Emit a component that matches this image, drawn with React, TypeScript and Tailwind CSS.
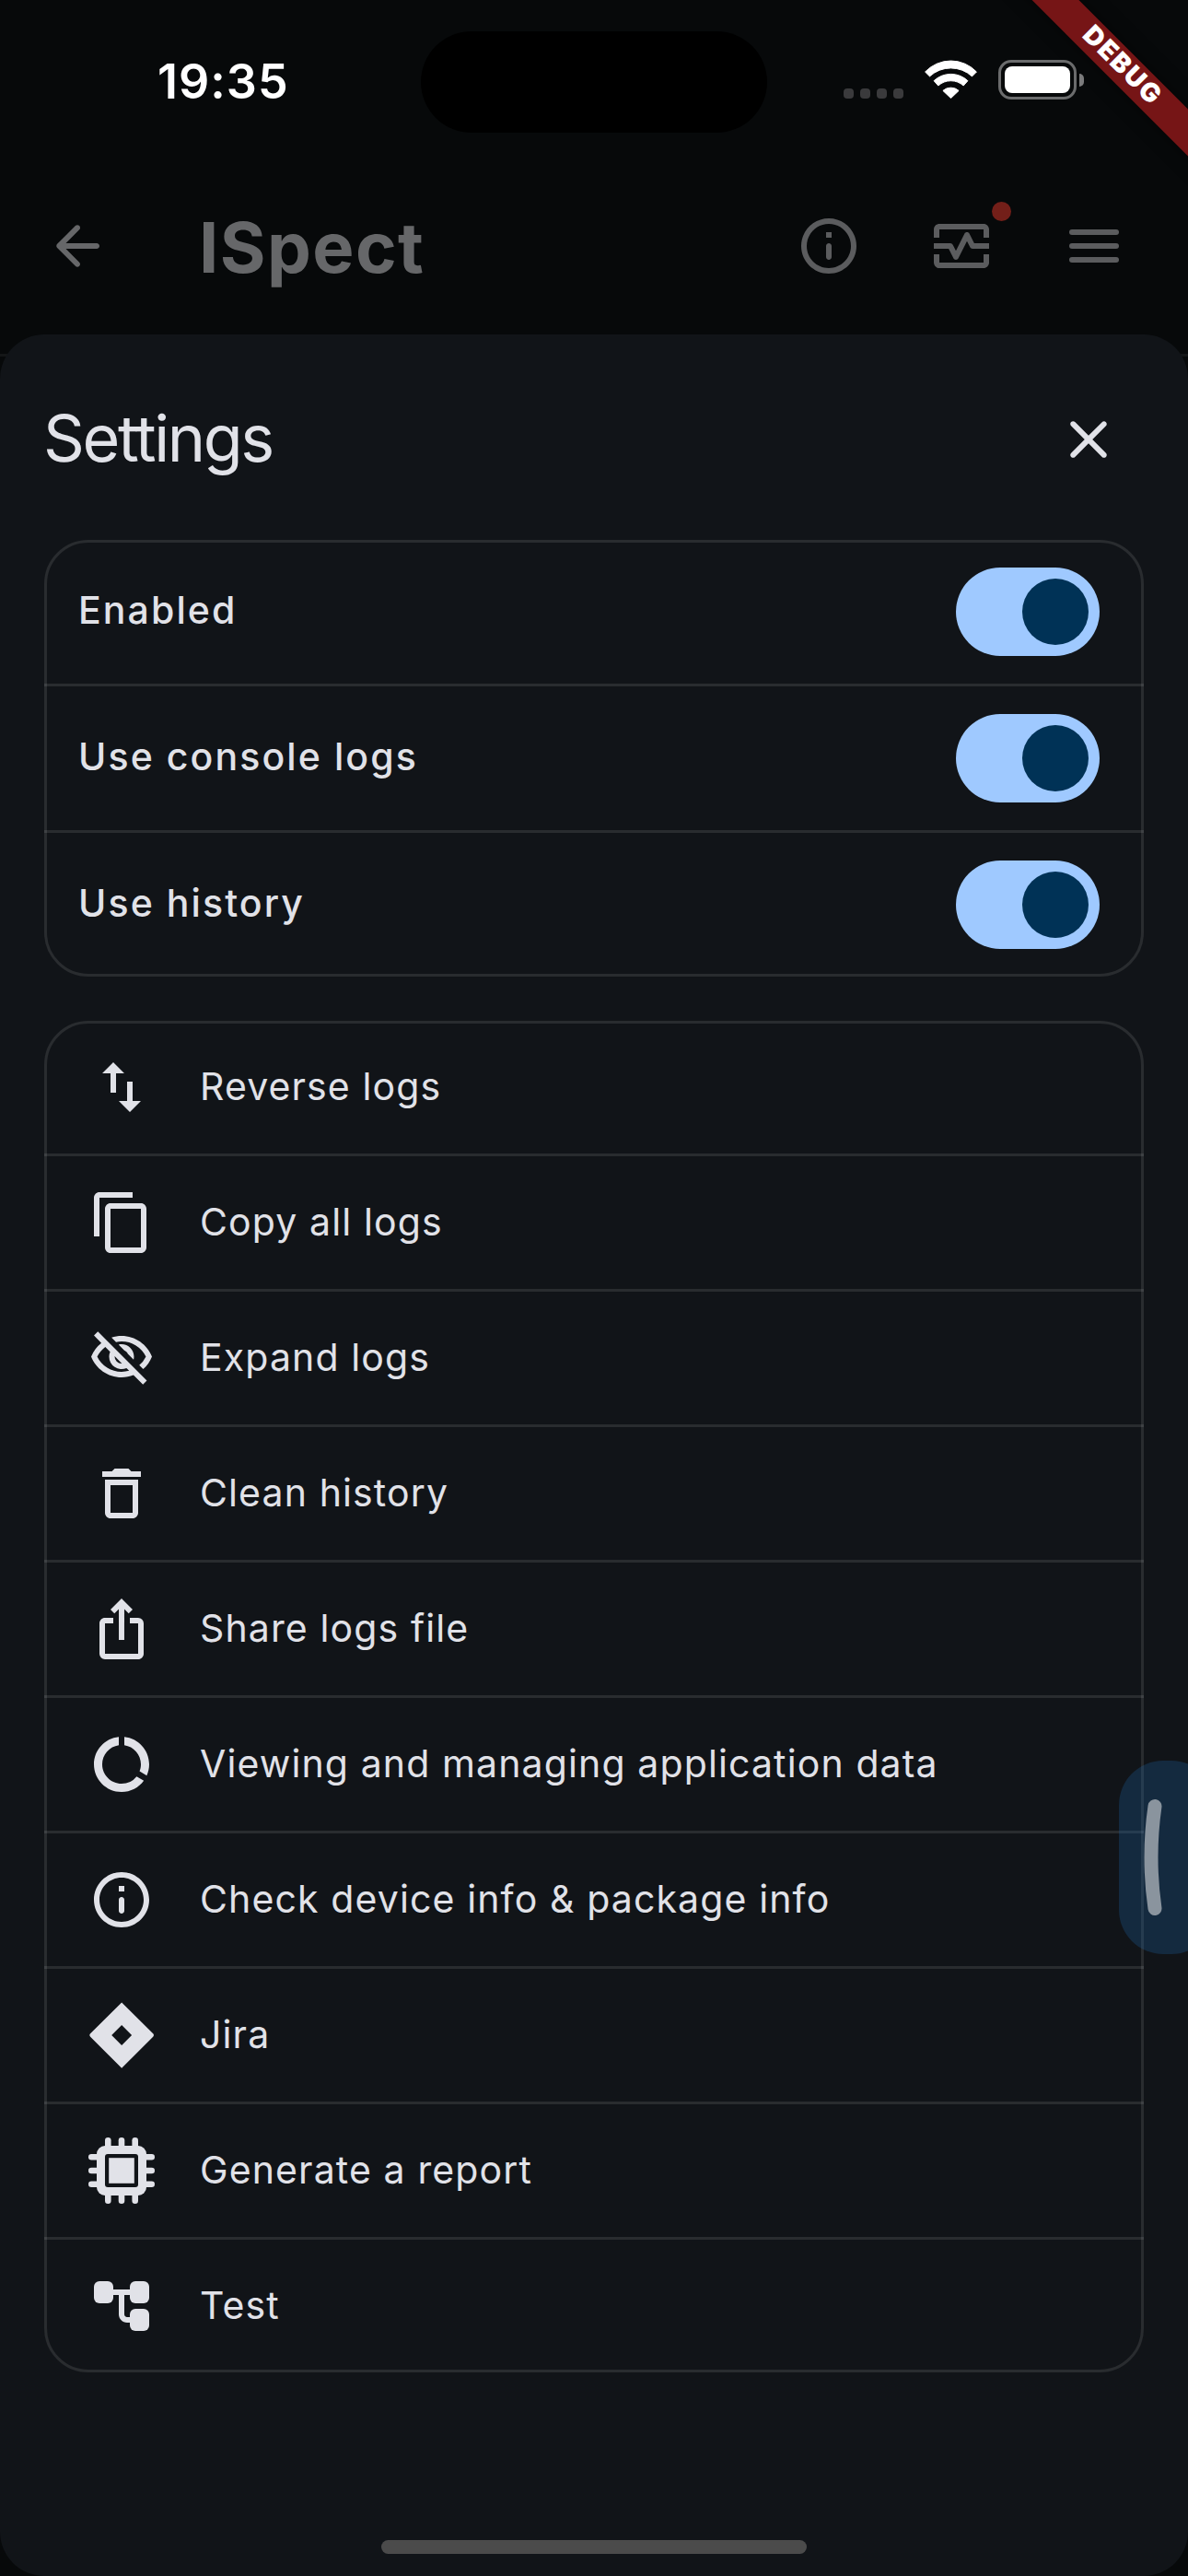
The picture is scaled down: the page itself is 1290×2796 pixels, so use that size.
import React from 'react';
import {
  MdContentCopy,
  MdDataUsage,
  MdDeleteOutline,
  MdIosShare,
  MdOutlineMonitorHeart,
  MdOutlineVisibilityOff,
  MdSwapVert,
} from 'react-icons/md';

type IconProps = { className?: string };

const Glyph = ({ className, children }: IconProps & { children: React.ReactNode }) => (
  <svg viewBox="0 0 24 24" fill="currentColor" className={className} aria-hidden="true">
    {children}
  </svg>
);

const BackIcon = ({ className }: IconProps) => (
  <Glyph className={className}>
    <path d="M19 11H7.83l4.88-4.88c.39-.39.39-1.03 0-1.42-.39-.39-1.02-.39-1.41 0l-6.59 6.59c-.39.39-.39 1.02 0 1.41l6.59 6.59c.39.39 1.02.39 1.41 0 .39-.39.39-1.02 0-1.41L7.83 13H19c.55 0 1-.45 1-1s-.45-1-1-1z" />
  </Glyph>
);

const InfoIcon = ({ className }: IconProps) => (
  <Glyph className={className}>
    <path d="M11 7h2v2h-2zM12 17c.55 0 1-.45 1-1v-4c0-.55-.45-1-1-1s-1 .45-1 1v4c0 .55.45 1 1 1zM12 2C6.48 2 2 6.48 2 12s4.48 10 10 10 10-4.48 10-10S17.52 2 12 2zm0 18c-4.41 0-8-3.59-8-8s3.59-8 8-8 8 3.59 8 8-3.59 8-8 8z" />
  </Glyph>
);

const MenuIcon = ({ className }: IconProps) => (
  <Glyph className={className}>
    <rect x="3" y="6" width="18" height="2" rx="1" />
    <rect x="3" y="11" width="18" height="2" rx="1" />
    <rect x="3" y="16" width="18" height="2" rx="1" />
  </Glyph>
);

const CloseIcon = ({ className }: IconProps) => (
  <Glyph className={className}>
    <path d="M18.3 5.71c-.39-.39-1.02-.39-1.41 0L12 10.59 7.11 5.7c-.39-.39-1.02-.39-1.41 0-.39.39-.39 1.02 0 1.41L10.59 12 5.7 16.89c-.39.39-.39 1.02 0 1.41.39.39 1.02.39 1.41 0L12 13.41l4.89 4.89c.39.39 1.02.39 1.41 0 .39-.39.39-1.02 0-1.41L13.41 12l4.89-4.89c.38-.38.38-1.02 0-1.4z" />
  </Glyph>
);

const JiraIcon = ({ className }: IconProps) => (
  <Glyph className={className}>
    <path
      fillRule="evenodd"
      d="M12.05.15 23.4 11.45c.35.35.35.8 0 1.15L12.05 23.9.7 12.6c-.35-.35-.35-.8 0-1.15L12.05.15zm0 8.2L8.4 12l3.65 3.65L15.7 12l-3.65-3.65z"
    />
  </Glyph>
);

const ChipIcon = ({ className }: IconProps) => (
  <Glyph className={className}>
    {[7.1, 12, 16.9].map((c) => (
      <React.Fragment key={c}>
        <rect x={c - 1.1} y="0" width="2.2" height="24" rx="1.1" />
        <rect x="0" y={c - 1.1} width="24" height="2.2" rx="1.1" />
      </React.Fragment>
    ))}
    <rect x="3" y="3" width="18" height="18" rx="3" />
    <rect x="6" y="6" width="12" height="12" rx="1" fill="#111418" />
    <rect x="7.4" y="7.4" width="9.2" height="9.2" />
  </Glyph>
);

const TreeIcon = ({ className }: IconProps) => (
  <Glyph className={className}>
    <rect x="2" y="3" width="7" height="8" rx="2" />
    <rect x="15" y="3" width="7" height="8" rx="2" />
    <rect x="15" y="13" width="7" height="8" rx="2" />
    <path d="M8 6h8v2h-3v7c0 .55.45 1 1 1h2v2h-2c-1.66 0-3-1.34-3-3V8H8z" />
  </Glyph>
);

const WifiIcon = () => (
  <svg viewBox="0 0 57 42" className="h-[42px] w-[57px]" fill="#fff" stroke="#fff" strokeWidth="1" strokeLinejoin="round" aria-hidden="true">
    <path d="M.6 13A38.5 38.5 0 0 1 56.4 13L51.5 17.9A33.9 33.9 0 0 0 5.5 17.9z" />
    <path d="M10.1 22.7A26.8 26.8 0 0 1 46.9 22.7L42.2 28A20.5 20.5 0 0 0 14.8 28z" />
    <path d="M19.9 33.4A13 13 0 0 1 37.1 33.4L28.5 41.6z" />
  </svg>
);

const toggles = ['Enabled', 'Use console logs', 'Use history'];

const actions: { label: string; Icon: React.ComponentType<IconProps> }[] = [
  { label: 'Reverse logs', Icon: MdSwapVert },
  { label: 'Copy all logs', Icon: MdContentCopy },
  { label: 'Expand logs', Icon: MdOutlineVisibilityOff },
  { label: 'Clean history', Icon: MdDeleteOutline },
  { label: 'Share logs file', Icon: MdIosShare },
  { label: 'Viewing and managing application data', Icon: MdDataUsage },
  { label: 'Check device info & package info', Icon: InfoIcon },
  { label: 'Jira', Icon: JiraIcon },
  { label: 'Generate a report', Icon: ChipIcon },
  { label: 'Test', Icon: TreeIcon },
];

const Card = ({ children }: { children: React.ReactNode }) => (
  <section className="relative">
    <div className="divide-y-3 divide-white/10">{children}</div>
    <div className="pointer-events-none absolute inset-0 rounded-[48px] border-3 border-white/10" />
  </section>
);

const StatusBar = () => (
  <div className="flex h-[183px] shrink-0 items-start pt-[34px]">
    <div className="w-[457px] pt-[29px] pl-[171px] text-[52px] leading-[52px] font-semibold tracking-[1px] text-white">19:35</div>
    <div className="h-[110px] w-[376px] rounded-full bg-black" />
    <div className="mt-[62px] ml-[83px] flex gap-[7px]">
      {[0, 1, 2, 3].map((i) => (
        <span key={i} className="size-[11px] rounded-[4px] bg-[#3a3a3c]" />
      ))}
    </div>
    <div className="mt-[31px] ml-[23px]">
      <WifiIcon />
    </div>
    <div className="mt-[31px] ml-[23px] flex items-center">
      <div className="h-[43px] w-[85px] rounded-[14px] border-3 border-[#6b6c6d] p-1">
        <div className="h-full w-full rounded-[8px] bg-white" />
      </div>
      <div className="ml-[3px] h-[14px] w-[5px] rounded-r-full bg-[#7b7b7c]" />
    </div>
  </div>
);

const AppBar = () => (
  <header className="flex h-[180px] shrink-0 items-start text-[#5b5c5e]">
    <div className="flex h-[168px] w-full items-center pr-[66px] pl-12">
      <BackIcon className="size-[72px] text-[#666769]" />
      <h1 className="mt-0.5 ml-24 flex-1 text-[76px] leading-none font-bold tracking-[1.4px] text-[#666769]">ISpect</h1>
      <div className="flex gap-[72px]">
        <InfoIcon className="size-[72px]" />
        <div className="relative">
          <MdOutlineMonitorHeart className="size-[72px]" />
          <span className="absolute -top-3 right-[-18px] size-[21px] rounded-full bg-[#731f19]" />
        </div>
        <MenuIcon className="size-[72px]" />
      </div>
    </div>
  </header>
);

const Toggle = () => (
  <div className="flex h-24 w-[156px] items-center justify-end rounded-full bg-[#9fc9ff] pr-3">
    <div className="size-[72px] rounded-full bg-[#003256]" />
  </div>
);

export default function App() {
  return (
    <div className="relative flex h-[2796px] w-[1290px] flex-col overflow-hidden bg-[#07090a] font-['Inter',sans-serif] text-[#e1e2e8]">
      <StatusBar />
      <AppBar />

      <div className="relative flex flex-1 flex-col">
        <div className="absolute inset-x-0 top-[21px] h-[3px] bg-[#141617]" />
        <main className="relative flex flex-1 flex-col rounded-[48px] bg-[#111418] px-12">
          <div className="flex h-[223px] items-center justify-between pt-[5px] pr-6">
            <h2 className="-mt-[3px] -ml-px text-[70px] leading-none tracking-[-2.4px]">Settings</h2>
            <CloseIcon className="size-[72px]" />
          </div>

          <div className="flex flex-col gap-12">
            <Card>
              {toggles.map((label) => (
                <div key={label} className="box-content flex h-[156px] items-center justify-between">
                  <span className="-mt-[3px] ml-[37px] text-[41px] leading-none font-medium tracking-[2.1px]">{label}</span>
                  <div className="mr-12">
                    <Toggle />
                  </div>
                </div>
              ))}
            </Card>

            <Card>
              {actions.map(({ label, Icon }) => (
                <div key={label} className="box-content flex h-36 items-center">
                  <Icon className="ml-12 size-[72px]" />
                  <span className="-mt-0.5 ml-[49px] text-[41px] leading-none tracking-[1.12px]">{label}</span>
                </div>
              ))}
            </Card>
          </div>

          <div className="mx-auto mt-auto mb-6 h-[15px] w-[462px] rounded-full bg-[#4b4b4b]" />
        </main>
      </div>

      {/* Draggable side handle, partly off the right edge */}
      <div className="absolute top-[1911px] left-[1215px] h-[210px] w-[105px] rounded-[48px] bg-[#216cb4]/25">
        <svg viewBox="0 0 105 210" className="size-full" fill="none" aria-hidden="true">
          <path d="M39 49.5Q31 105 39 160.5" stroke="#8a949e" strokeWidth="15" strokeLinecap="round" />
        </svg>
      </div>

      {/* Debug ribbon */}
      <div className="absolute top-[54px] left-[1068px] flex h-9 w-[300px] rotate-45 items-center justify-center bg-[#761516] shadow-[0_0_18px_rgba(0,0,0,0.5)]">
        <span className="-mt-[3px] text-[28.5px] leading-none font-black tracking-[1.8px] text-white">DEBUG</span>
      </div>
    </div>
  );
}
